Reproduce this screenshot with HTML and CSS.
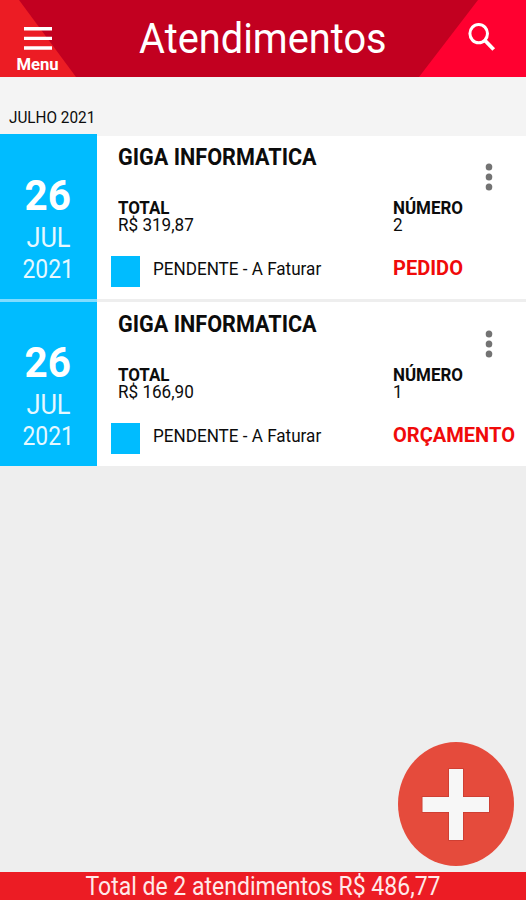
FILE: index.html
```html
<!DOCTYPE html>
<html lang="pt-BR">
<head>
<meta charset="utf-8">
<title>Atendimentos</title>
<link rel="stylesheet" href="styles.css">
</head>
<body>
<header class="bar">
  <svg class="bar-bg" viewBox="0 0 526 77" preserveAspectRatio="none"><path fill="#ec1c24" d="M0 0H19L76 77H0z"/><path fill="#ff0030" d="M478 0H526V77H419z"/></svg>
  <button class="menu">
    <svg width="28" height="25" viewBox="0 0 28 25" fill="#fff"><path d="M0 1h28v3.400H0zM0 10.700h28v3.400H0zM0 20.300h28v3.400H0z"/></svg>
    <span class="t menu-label">Menu</span>
  </button>
  <h1 class="t title">Atendimentos</h1>
  <button class="search"><svg width="28" height="30" viewBox="0 0 28 30" fill="none" stroke="#fff"><ellipse cx="10.700" cy="11.600" rx="8.800" ry="9.200" stroke-width="3"/><path d="M17 18.500L25.700 27.500" stroke-width="3.800"/></svg></button>
</header>
<main>
  <h2 class="month"><span class="t">JULHO 2021</span></h2>
  <article class="card first">
    <div class="date"><b class="t day">26</b><span class="t mon">JUL</span><span class="t year">2021</span></div>
    <div class="body">
      <h3 class="name"><span class="t">GIGA INFORMATICA</span></h3>
      <button class="more"><svg width="8" height="28" viewBox="0 0 8 28" fill="#737373"><ellipse cx="4" cy="4" rx="3.300" ry="3.500"/><ellipse cx="4" cy="14" rx="3.300" ry="3.500"/><ellipse cx="4" cy="24" rx="3.300" ry="3.500"/></svg></button>
      <div class="field"><b class="t key">TOTAL</b><span class="t value">R$ 319,87</span></div>
      <div class="field"><b class="t key">NÚMERO</b><span class="t value">2</span></div>
      <div class="status"><i class="swatch"></i><span class="t state">PENDENTE - A Faturar</span></div>
      <div class="kind"><b class="t">PEDIDO</b></div>
    </div>
  </article>
  <div class="divider"></div>
  <article class="card second">
    <div class="date"><b class="t day">26</b><span class="t mon">JUL</span><span class="t year">2021</span></div>
    <div class="body">
      <h3 class="name"><span class="t">GIGA INFORMATICA</span></h3>
      <button class="more"><svg width="8" height="28" viewBox="0 0 8 28" fill="#737373"><ellipse cx="4" cy="4" rx="3.300" ry="3.500"/><ellipse cx="4" cy="14" rx="3.300" ry="3.500"/><ellipse cx="4" cy="24" rx="3.300" ry="3.500"/></svg></button>
      <div class="field"><b class="t key">TOTAL</b><span class="t value">R$ 166,90</span></div>
      <div class="field"><b class="t key">NÚMERO</b><span class="t value">1</span></div>
      <div class="status"><i class="swatch"></i><span class="t state">PENDENTE - A Faturar</span></div>
      <div class="kind"><b class="t">ORÇAMENTO</b></div>
    </div>
  </article>
</main>
<button class="add"><svg width="117" height="125" viewBox="0 0 117 125"><ellipse cx="58" cy="63" rx="58" ry="62" fill="#e54b3c"/><path fill="none" stroke="#c83d30" stroke-width="1.500" d="M51 28h14v28h26v15h-26v28h-14v-28h-26.500v-15h26.500z"/><path fill="#f7f7f7" d="M51 28h14v28h26v15h-26v28h-14v-28h-26.500v-15h26.500z"/></svg></button>
<footer class="sum"><span class="t">Total de 2 atendimentos R$ 486,77</span></footer>
</body>
</html>
```
FILE: styles.css
```css
* { box-sizing: border-box; margin: 0; padding: 0; }
body {
  width: 526px; height: 900px; overflow: hidden;
  display: flex; flex-direction: column;
  background: #eee; color: #0c0c0c;
  font-family: Roboto, "Liberation Sans", sans-serif;
}
button { border: 0; background: none; color: inherit; font: inherit; display: block; }
svg { display: block; }
.t { display: inline-block; white-space: nowrap; transform: scaleX(.94); transform-origin: left; }

.bar { position: relative; height: 77px; background: #c20020; color: #fff; display: flex; align-items: flex-start; justify-content: space-between; }
.bar-bg { position: absolute; inset: 0; width: 526px; height: 77px; }
.menu { position: relative; width: 76px; padding-top: 26px; display: flex; flex-direction: column; align-items: center; }
.menu-label { font-size: 17px; font-weight: 700; line-height: 20px; margin-top: 3px; transform: scaleX(.98); transform-origin: center; }
.title { position: relative; font-size: 43px; font-weight: 400; line-height: 50px; margin-top: 13px; transform: scaleX(.925); transform-origin: center; }
.search { position: relative; padding: 22px 30px 0 18px; }

main { flex: 1; }
.month { height: 57px; padding: 29px 0 0 9px; background: #f4f4f4; font-size: 17px; font-weight: 400; line-height: 22px; }
.month .t { transform: scaleX(.9); }
.card { display: flex; height: 164px; background: #fff; }
.card.first { height: 165px; }
.divider { height: 3px; background: linear-gradient(90deg, #80dcff 97px, #eee 97px); }
.date { width: 97px; background: #00bcff; color: #fff; display: flex; flex-direction: column; align-items: center; padding: 36px 1px 0 0; }
.second .date { padding-top: 35px; }
.date .t { transform-origin: center; }
.day { font-size: 43px; line-height: 50px; }
.mon { font-size: 27px; line-height: 32px; margin-top: 2px; opacity: .9; }
.date .year { font-size: 26px; line-height: 32px; margin-top: -1px; opacity: .9; transform: scaleX(.88); }
.body { flex: 1; display: grid; grid-template-columns: 275px 1fr; grid-template-rows: 65px 56px 1fr; padding-left: 21px; }
.first .body { border-top: 2px solid #f4f4f4; grid-template-rows: 64px 56px 1fr; }
.name { padding-top: 8px; font-size: 23px; font-weight: 700; line-height: 28px; }
.second .name { padding-top: 9px; }
.more { justify-self: end; align-self: start; margin: 28px 33px 0 0; }
.first .more { margin-top: 27px; }
.field { display: flex; flex-direction: column; align-items: flex-start; font-size: 18px; line-height: 17px; }
.key { line-height: 16px; }
.field .value { transform: scaleX(.95); }
.status { display: flex; align-items: flex-start; margin-left: -7px; }
.swatch { width: 29px; height: 31px; margin-right: 13px; background: #00bcff; }
.state { font-size: 18px; line-height: 26px; transform: scaleX(.95); }
.kind { color: #f00a0a; font-size: 21px; line-height: 24px; }
.kind .t { transform: scaleX(.955); }

.add { position: absolute; left: 398px; top: 741px; }
.sum { height: 28px; background: #ec1c24; color: #ffe9e9; font-size: 25px; line-height: 30px; text-align: center; }
.sum .t { transform: scaleX(.92); transform-origin: center; }
```
